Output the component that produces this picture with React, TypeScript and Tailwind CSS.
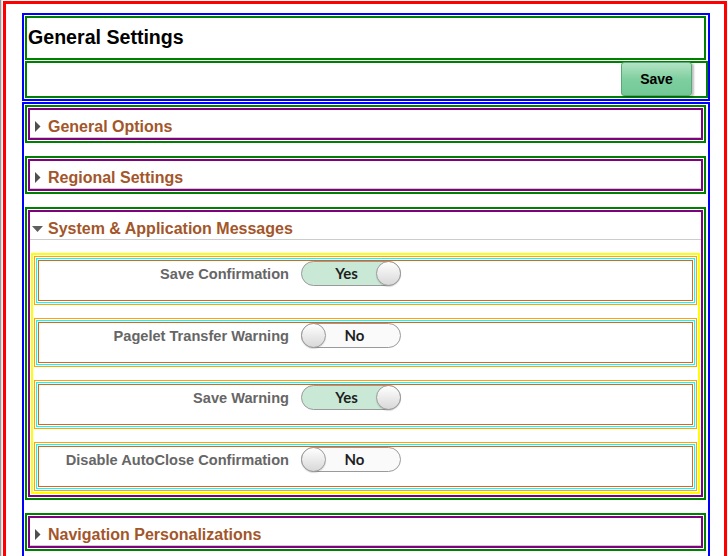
import React from "react";

const LABEL_FONT = "font-['Liberation_Sans',Arial,sans-serif]";

function CaretRight() {
  return (
    <svg width="6" height="11" viewBox="0 0 6 11">
      <polygon points="0,0 5.5,5.5 0,11" fill="#4f4f4f" />
    </svg>
  );
}

function CaretDown() {
  return (
    <svg width="11" height="6" viewBox="0 0 11 6">
      <polygon points="0,0 11,0 5.5,6" fill="#5f5f5f" />
    </svg>
  );
}

function Toggle({ on }: { on: boolean }) {
  return (
    <div
      className={
        "relative ml-[12px] h-[25px] w-[100px] shrink-0 rounded-full border border-[#9a9a9a] " +
        (on ? "bg-[#c9e9d6]" : "bg-[#fafafa]")
      }
    >
      <div
        className={
          "flex h-full items-center justify-center font-['Lato',sans-serif] text-[15px] font-bold text-[#1e1e1e] " +
          (on ? "pr-[9px]" : "pl-[7px]")
        }
      >
        {on ? "Yes" : "No"}
      </div>
      <div
        className={
          "absolute top-[-1px] h-[25px] w-[25px] rounded-full border border-[#9a9a9a] bg-gradient-to-b from-white to-[#d8d8d8] shadow-[0_1px_1px_rgba(0,0,0,0.15)] " +
          (on ? "right-[-1px]" : "left-[-1px]")
        }
      />
    </div>
  );
}

function SettingRow({ label, on }: { label: string; on: boolean }) {
  return (
    <div className="border border-[#ffa500] p-[1px]">
      <div className="border border-[#00ffff] p-[1px]">
        <div className="flex h-[41px] items-start border border-[#d2691e]">
          <div
            className={
              "w-[250px] shrink-0 pt-[1px] text-right text-[14.6px] font-bold leading-[24px] text-[#666666] " +
              LABEL_FONT
            }
          >
            {label}
          </div>
          <Toggle on={on} />
        </div>
      </div>
    </div>
  );
}

function Section({
  title,
  open,
  children,
}: {
  title: string;
  open?: boolean;
  children?: React.ReactNode;
}) {
  return (
    <div className="w-[681px] border-2 border-[#008000] p-[1px]">
      <div className="border-2 border-[#800080]">
        <div className="flex h-[28px] items-center border-b border-[#cccccc] pl-[2px] pt-[6px]">
          <div className="flex w-[11px] items-center justify-center">
            {open ? <CaretDown /> : <CaretRight />}
          </div>
          <span className="ml-[5px] text-[16px] font-bold leading-[20px] text-[#a3562a]">{title}</span>
        </div>
        {open && children}
      </div>
    </div>
  );
}

export default function App() {
  const rows = [
    { label: "Save Confirmation", on: true },
    { label: "Pagelet Transfer Warning", on: false },
    { label: "Save Warning", on: true },
    { label: "Disable AutoClose Confirmation", on: false },
  ];

  return (
    <div className={"flex h-[556px] w-[728px] overflow-hidden bg-white " + LABEL_FONT}>
      <div className="w-[1px] shrink-0 bg-[#9a9a9a]" />
      <div className="w-[1px] shrink-0 bg-[#dedede]" />

      <div className="ml-[1px] mt-[1px] w-[724px] shrink-0 self-start border-[3px] border-b-0 border-[#ff0000] pl-[16px] pt-[9px]">
        {/* page header */}
        <div className="w-[688px] border-2 border-[#0000ff] py-[1px] pl-[1px]">
          <div className="flex h-[44px] w-[681px] items-center border-2 border-[#008000] pl-[1px]">
            <h1 className="text-[19.6px] font-bold text-black">General Settings</h1>
          </div>
          <div className="mt-[1px] flex h-[37px] w-[683px] items-start justify-end border-2 border-[#008000] pr-[14px]">
            <button className="mt-[-1px] h-[34px] w-[71px] rounded-[3px] border border-[#5aa777] bg-gradient-to-b from-[#b2e3c4] via-[#7fcfa0] to-[#72c895] text-[14px] font-bold text-black shadow-[2px_1px_2px_rgba(0,0,0,0.25)]">
              Save
            </button>
          </div>
        </div>

        {/* settings groups */}
        <div className="mt-[1px] flex w-[688px] flex-col gap-[13px] border-2 border-b-0 border-[#0000ff] pb-[14px] pl-[1px] pt-[1px]">
          <Section title="General Options" />
          <Section title="Regional Settings" />
          <Section title="System & Application Messages" open>
            <div className="mx-[1px] mb-[1px] mt-[13px] flex flex-col gap-[13px] border-2 border-[#ffff00] p-[1px]">
              {rows.map((r) => (
                <SettingRow key={r.label} label={r.label} on={r.on} />
              ))}
            </div>
          </Section>
          <Section title="Navigation Personalizations" />
        </div>
      </div>
    </div>
  );
}
